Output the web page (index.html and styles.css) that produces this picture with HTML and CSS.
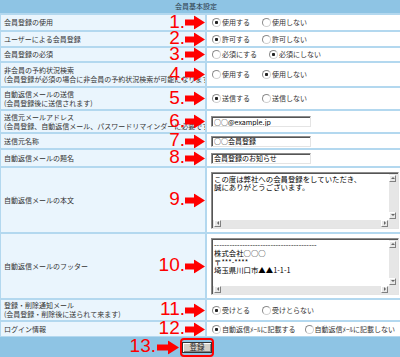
FILE: index.html
```html
<!DOCTYPE html>
<html lang="ja">
<head>
  <meta charset="UTF-8" />
  <title>会員基本設定</title>
  <link rel="stylesheet" href="styles.css">
</head>
<body>
  <div class="panel">
    <div class="panel-title">会員基本設定</div>

    <div class="form-grid">
      <div class="label">
        <span class="label-text">会員登録の使用</span>
        <span class="marker"><b>1.</b><svg width="20" height="14" viewBox="0 0 20 14"><path d="M0 4H9V0L20 7L9 14V10H0Z" fill="#f00"/></svg></span>
      </div>
      <div class="field">
        <label class="choice"><input type="radio" name="use" checked>使用する</label>
        <label class="choice"><input type="radio" name="use">使用しない</label>
      </div>

      <div class="label">
        <span class="label-text">ユーザーによる会員登録</span>
        <span class="marker"><b>2.</b><svg width="20" height="14" viewBox="0 0 20 14"><path d="M0 4H9V0L20 7L9 14V10H0Z" fill="#f00"/></svg></span>
      </div>
      <div class="field">
        <label class="choice"><input type="radio" name="allow" checked>許可する</label>
        <label class="choice"><input type="radio" name="allow">許可しない</label>
      </div>

      <div class="label">
        <span class="label-text">会員登録の必須</span>
        <span class="marker"><b>3.</b><svg width="20" height="14" viewBox="0 0 20 14"><path d="M0 4H9V0L20 7L9 14V10H0Z" fill="#f00"/></svg></span>
      </div>
      <div class="field">
        <label class="choice"><input type="radio" name="required">必須にする</label>
        <label class="choice"><input type="radio" name="required" checked>必須にしない</label>
      </div>

      <div class="label">
        <span class="label-text">非会員の予約状況検索</span>
        <span class="label-text">(会員登録が必須の場合に非会員の予約状況検索が可能になります)</span>
        <span class="marker"><b>4.</b><svg width="20" height="14" viewBox="0 0 20 14"><path d="M0 4H9V0L20 7L9 14V10H0Z" fill="#f00"/></svg></span>
      </div>
      <div class="field">
        <label class="choice"><input type="radio" name="guest">使用する</label>
        <label class="choice"><input type="radio" name="guest" checked>使用しない</label>
      </div>

      <div class="label">
        <span class="label-text">自動返信メールの送信</span>
        <span class="label-text">(会員登録後に送信されます)</span>
        <span class="marker"><b>5.</b><svg width="20" height="14" viewBox="0 0 20 14"><path d="M0 4H9V0L20 7L9 14V10H0Z" fill="#f00"/></svg></span>
      </div>
      <div class="field">
        <label class="choice"><input type="radio" name="autoreply" checked>送信する</label>
        <label class="choice"><input type="radio" name="autoreply">送信しない</label>
      </div>

      <div class="label">
        <span class="label-text">送信元メールアドレス</span>
        <span class="label-text">(会員登録、自動返信メール、パスワードリマインダーに必要です)</span>
        <span class="marker"><b>6.</b><svg width="20" height="14" viewBox="0 0 20 14"><path d="M0 4H9V0L20 7L9 14V10H0Z" fill="#f00"/></svg></span>
      </div>
      <div class="field">
        <input class="text-input" type="text" value="○○@example.jp">
      </div>

      <div class="label">
        <span class="label-text">送信元名称</span>
        <span class="marker"><b>7.</b><svg width="20" height="14" viewBox="0 0 20 14"><path d="M0 4H9V0L20 7L9 14V10H0Z" fill="#f00"/></svg></span>
      </div>
      <div class="field">
        <input class="text-input" type="text" value="○○会員登録">
      </div>

      <div class="label">
        <span class="label-text">自動返信メールの題名</span>
        <span class="marker"><b>8.</b><svg width="20" height="14" viewBox="0 0 20 14"><path d="M0 4H9V0L20 7L9 14V10H0Z" fill="#f00"/></svg></span>
      </div>
      <div class="field">
        <input class="text-input" type="text" value="会員登録のお知らせ">
      </div>

      <div class="label">
        <span class="label-text">自動返信メールの本文</span>
        <span class="marker"><b>9.</b><svg width="20" height="14" viewBox="0 0 20 14"><path d="M0 4H9V0L20 7L9 14V10H0Z" fill="#f00"/></svg></span>
      </div>
      <div class="field">
        <div class="memo">
          <div class="memo-text">この度は弊社への会員登録をしていただき、
誠にありがとうございます。</div>
          <div class="vbar"><span class="sb-btn sb-up"></span><span class="sb-btn sb-down"></span></div>
          <div class="hbar"><span class="sb-btn sb-left"></span><span class="sb-btn sb-right"></span></div>
          <div class="corner"></div>
        </div>
      </div>

      <div class="label">
        <span class="label-text">自動返信メールのフッター</span>
        <span class="marker"><b>10.</b><svg width="20" height="14" viewBox="0 0 20 14"><path d="M0 4H9V0L20 7L9 14V10H0Z" fill="#f00"/></svg></span>
      </div>
      <div class="field">
        <div class="memo">
          <div class="memo-text">----------------------------------------
株式会社○○○
〒***-****
埼玉県川口市▲▲1-1-1</div>
          <div class="vbar"><span class="sb-btn sb-up"></span><span class="sb-btn sb-down"></span></div>
          <div class="hbar"><span class="sb-btn sb-left"></span><span class="sb-btn sb-right"></span></div>
          <div class="corner"></div>
        </div>
      </div>

      <div class="label">
        <span class="label-text">登録・削除通知メール</span>
        <span class="label-text">(会員登録・削除後に送られて来ます)</span>
        <span class="marker"><b>11.</b><svg width="20" height="14" viewBox="0 0 20 14"><path d="M0 4H9V0L20 7L9 14V10H0Z" fill="#f00"/></svg></span>
      </div>
      <div class="field">
        <label class="choice"><input type="radio" name="notify" checked>受けとる</label>
        <label class="choice"><input type="radio" name="notify">受けとらない</label>
      </div>

      <div class="label">
        <span class="label-text">ログイン情報</span>
        <span class="marker"><b>12.</b><svg width="20" height="14" viewBox="0 0 20 14"><path d="M0 4H9V0L20 7L9 14V10H0Z" fill="#f00"/></svg></span>
      </div>
      <div class="field field-tight">
        <label class="choice"><input type="radio" name="login" checked>自動返信ﾒｰﾙに記載する</label>
        <label class="choice"><input type="radio" name="login">自動返信ﾒｰﾙに記載しない</label>
      </div>
    </div>

    <div class="panel-foot">
      <div class="submit-wrap">
        <span class="marker marker-foot"><b>13.</b><svg width="22" height="14" viewBox="0 0 22 14"><path d="M0 4H11V0L22 7L11 14V10H0Z" fill="#f00"/></svg></span>
        <button class="submit-btn" type="button">登録</button>
      </div>
    </div>
  </div>
</body>
</html>
```

FILE: styles.css
```css
* { box-sizing: border-box; margin: 0; padding: 0; }
body {
  font-family: 'Noto Sans CJK JP', sans-serif;
  background: #8ec4e4;
  color: #333;
}
.panel {
  width: 400px;
  height: 357px;
  background: #8ec4e4;
  overflow: hidden;
}
.panel-title {
  height: 13px;
  line-height: 13px;
  font-size: 7px;
  text-align: center;
  padding-right: 8px;
  color: #2c3a48;
}
.form-grid {
  display: grid;
  grid-template-columns: 204px 1fr;
  grid-template-rows: 15px 14px 13px 23px 21px 21px 14px 16px 64px 64px 20px 14px;
  gap: 2px;
  padding: 2px 0 1px 1px;
  background: #b3d8ef;
}
.label {
  position: relative;
  background: #eaf5fd;
  padding-left: 3px;
  display: flex;
  flex-direction: column;
  justify-content: center;
  font-size: 7px;
}
.label-text {
  display: block;
  white-space: nowrap;
  overflow: hidden;
  line-height: 9px;
}
.field {
  background: #fff;
  display: flex;
  align-items: center;
  gap: 12px;
  padding-left: 4px;
  font-size: 7px;
}
.field-tight {
  gap: 9px;
}

/* red numbered callouts */
.marker {
  position: absolute;
  right: 0;
  top: 50%;
  transform: translateY(-50%);
  z-index: 1;
  display: flex;
  align-items: center;
  font-family: 'Liberation Sans', Arial, sans-serif;
  font-size: 19px;
  line-height: 19px;
  color: #f00;
}
.marker b {
  font-weight: normal;
  margin-bottom: 4px;
}
.marker-foot {
  right: calc(100% + 3px);
  top: 50%;
}
.marker-foot svg {
  margin-left: 1px;
}

/* radios */
.choice {
  display: inline-flex;
  align-items: center;
  gap: 1px;
  white-space: nowrap;
  line-height: 9px;
}
.choice input {
  appearance: none;
  -webkit-appearance: none;
  width: 9px;
  height: 9px;
  border-radius: 50%;
  border: 1px solid;
  border-color: #8c8c8c #d0d0d0 #d0d0d0 #8c8c8c;
  background: #fff;
  margin: 0;
}
.choice input:checked {
  background: radial-gradient(circle, #222 0 1.3px, #fff 1.9px);
}
.field .choice:first-child { margin-left: 1px; }

/* text inputs */
.text-input {
  width: 100px;
  height: 11px;
  border: 1px solid;
  border-color: #8c8c8c #e4e4e4 #e4e4e4 #8c8c8c;
  box-shadow: inset 1px 1px 0 #555;
  padding: 0 2px;
  font-family: 'Noto Sans CJK JP', sans-serif;
  font-size: 7px;
  line-height: 9px;
  color: #000;
  background: #fff;
}

/* fake textarea with classic scrollbars */
.memo {
  width: 188px;
  height: 57px;
  display: grid;
  grid-template-columns: 1fr 9px;
  grid-template-rows: 1fr 8px;
  border: 1px solid;
  border-color: #8c8c8c #e4e4e4 #e4e4e4 #8c8c8c;
  box-shadow: inset 1px 1px 0 #555;
  padding: 1px 0 0 1px;
  background: #fff;
}
.memo-text {
  white-space: pre;
  overflow: hidden;
  padding: 1px 1px 0 1px;
  font-size: 7.4px;
  line-height: 8.5px;
  color: #000;
}
.vbar {
  background: #e6e6e6;
  display: flex;
  flex-direction: column;
  justify-content: space-between;
  padding: 1px 1px 1px 0;
}
.hbar {
  background: #e6e6e6;
  display: flex;
  justify-content: space-between;
  padding: 0 1px 1px 1px;
}
.corner {
  background: #e6e6e6;
}
.sb-btn {
  position: relative;
  display: block;
  width: 7px;
  height: 7px;
  background: #e8e8e8;
  border: 1px solid;
  border-color: #fff #808080 #808080 #fff;
}
.sb-btn::after {
  content: '';
  position: absolute;
  left: 50%;
  top: 50%;
  width: 0;
  height: 0;
  border: 2px solid transparent;
}
.sb-up::after { border-bottom-color: #666; border-top-width: 0; transform: translate(-50%, -50%); }
.sb-down::after { border-top-color: #666; border-bottom-width: 0; transform: translate(-50%, -50%); }
.sb-left::after { border-right-color: #666; border-left-width: 0; transform: translate(-50%, -50%); }
.sb-right::after { border-left-color: #666; border-right-width: 0; transform: translate(-50%, -50%); }

/* footer */
.panel-foot {
  height: 20px;
  display: flex;
  justify-content: center;
  align-items: center;
  padding-right: 6px;
}
.submit-wrap {
  position: relative;
  border: 2px solid #f00;
  border-radius: 4px;
  padding: 2px 0;
}
.submit-btn {
  display: block;
  width: 30px;
  height: 11px;
  background: #d4d0c8;
  border: 1px solid #333;
  box-shadow: inset 1px 1px 0 #fff, inset -1px -1px 0 #808080;
  font-family: 'Noto Sans CJK JP', sans-serif;
  font-size: 7.5px;
  line-height: 8px;
  color: #222;
}
```
